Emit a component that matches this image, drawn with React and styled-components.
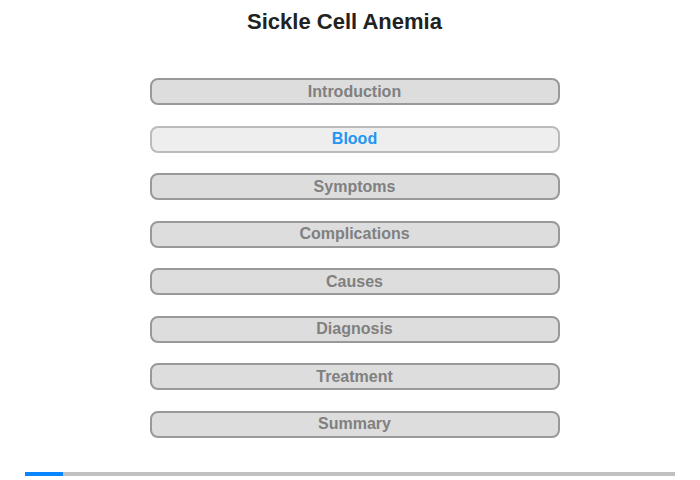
import styled, { createGlobalStyle } from "styled-components";

const GlobalStyle = createGlobalStyle`
  html, body {
    margin: 0;
    padding: 0;
    background: #ffffff;
    font-family: "Liberation Sans", Arial, sans-serif;
  }
`;

const sections = [
  "Introduction",
  "Blood",
  "Symptoms",
  "Complications",
  "Causes",
  "Diagnosis",
  "Treatment",
  "Summary",
];

export default function App() {
  return (
    <>
      <GlobalStyle />
      <StyledPage>
        <StyledTitle>Sickle Cell Anemia</StyledTitle>
        <StyledMenu>
          {sections.map((name) => (
            <StyledMenuButton key={name} $active={name === "Blood"}>
              {name}
            </StyledMenuButton>
          ))}
        </StyledMenu>
        <StyledProgressTrack>
          <StyledProgressFill />
        </StyledProgressTrack>
      </StyledPage>
    </>
  );
}

const StyledPage = styled.div`
  width: 700px;
  height: 480px;
  display: flex;
  flex-direction: column;
  align-items: center;
  box-sizing: border-box;
  padding-top: 9px;
`;

const StyledTitle = styled.h1`
  margin: 0 11px 0 0;
  font-size: 22px;
  line-height: 26px;
  font-weight: 700;
  color: #222222;
`;

const StyledMenu = styled.div`
  margin: 43px 0 0 9px;
  display: flex;
  flex-direction: column;
  gap: 20.5px;
`;

const StyledMenuButton = styled.div`
  width: 410px;
  height: 27px;
  box-sizing: border-box;
  border: 2px solid ${(p) => (p.$active ? "#bbbbbb" : "#999999")};
  border-radius: 8px;
  background: ${(p) => (p.$active ? "#eeeeee" : "#dddddd")};
  color: ${(p) => (p.$active ? "#2196f3" : "#808080")};
  font-size: 16px;
  font-weight: 700;
  display: flex;
  align-items: center;
  justify-content: center;
`;

const StyledProgressTrack = styled.div`
  margin-top: 34px;
  width: 650px;
  height: 4px;
  background: #c0c0c0;
  display: flex;
`;

const StyledProgressFill = styled.div`
  width: 38px;
  background: #0a84ff;
`;
